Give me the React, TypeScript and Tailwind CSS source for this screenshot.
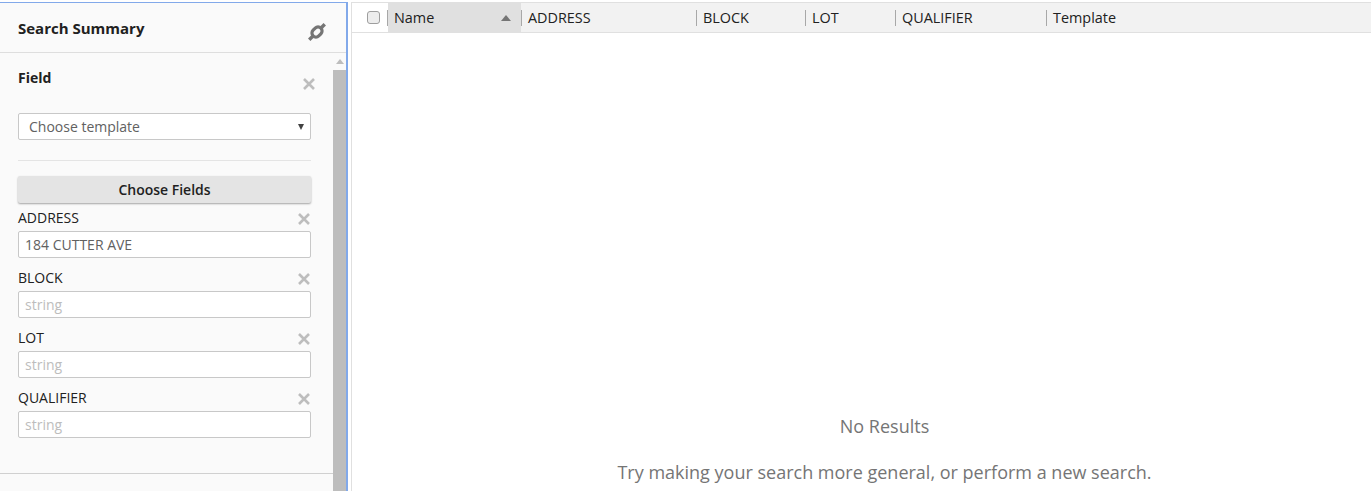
const FONT = "font-['Open_Sans',sans-serif]"

const COLUMNS = [
  { label: 'ADDRESS', width: 'w-[175px]' },
  { label: 'BLOCK', width: 'w-[109px]' },
  { label: 'LOT', width: 'w-[90px]' },
  { label: 'QUALIFIER', width: 'w-[151px]' },
  { label: 'Template', width: 'w-[150px]' },
]

const FIELDS = [
  { label: 'ADDRESS', value: '184 CUTTER AVE' },
  { label: 'BLOCK', value: '' },
  { label: 'LOT', value: '' },
  { label: 'QUALIFIER', value: '' },
]

function CloseIcon() {
  return (
    <svg width="12" height="12" viewBox="0 0 12 12" className="text-[#bdbdbd]">
      <path d="M1 1 L11 11 M11 1 L1 11" stroke="currentColor" strokeWidth="2.6" />
    </svg>
  )
}

function LinkIcon() {
  return (
    <svg width="20" height="20" viewBox="0 0 20 20" className="text-[#757575]">
      <g transform="rotate(-45 10 10)" fill="none" stroke="currentColor">
        <rect x="4.5" y="6" width="11" height="8" rx="4" strokeWidth="3.2" />
        <path d="M-1 10 H4 M16 10 H21" strokeWidth="3.4" />
      </g>
    </svg>
  )
}

function FieldRow({ label, value }: { label: string; value: string }) {
  return (
    <div className="h-[60px]">
      <div className="flex h-[27px] items-center justify-between pb-[1px]">
        <span className="text-[14px] text-[#212121]">{label}</span>
        <span className="mr-[1px] mt-[3px] flex"><CloseIcon /></span>
      </div>
      <div className="flex h-[27px] items-center rounded-[2px] border border-[#c8c8c8] bg-white px-[6px] text-[14px]">
        {value ? <span className="text-[#616161]">{value}</span> : <span className="text-[#bdbdbd]">string</span>}
      </div>
    </div>
  )
}

function Sidebar() {
  return (
    <aside className="flex h-full w-[348px] shrink-0 flex-col border-t border-r-2 border-[#82a9ea] bg-[#fafafa]">
      <div className="flex h-[50px] shrink-0 items-center justify-between border-b border-[#dedede] pl-[18px] pr-[19px]">
        <span className="mt-[2px] text-[15px] font-bold text-[#212121]">Search Summary</span>
        <span className="mt-[8px] flex"><LinkIcon /></span>
      </div>
      <div className="flex min-h-0 flex-1">
        <div className="min-w-0 flex-1">
          <div className="px-[18px] pr-[22px]">
            <div className="flex h-[60px] items-start justify-between pt-[15px]">
              <span className="text-[14px] font-bold leading-[20px] text-[#212121]">Field</span>
              <span className="-mr-[4px] mt-[10px] flex"><CloseIcon /></span>
            </div>
            <div className="flex h-[27px] items-center justify-between rounded-[2px] border border-[#c8c8c8] bg-white pl-[10px] pr-[6px] text-[14px] text-[#616161]">
              <span>Choose template</span>
              <span className="h-0 w-0 border-x-[3px] border-t-[6px] border-x-transparent border-t-[#424242]" />
            </div>
            <div className="mt-[20px] h-px bg-[#e4e4e4]" />
            <div className="mt-[15px] flex h-[27px] items-center justify-center rounded-[2px] bg-[#e4e4e4] text-[14px] font-semibold text-[#212121] shadow-[0_1px_2px_rgba(0,0,0,0.35)]">
              Choose Fields
            </div>
            <div className="mt-[1px]">
              {FIELDS.map((f) => (
                <FieldRow key={f.label} label={f.label} value={f.value} />
              ))}
            </div>
          </div>
          <div className="mt-[29px] h-px bg-[#d0d0d0]" />
        </div>
        <div className="flex w-[13px] shrink-0 flex-col">
          <div className="flex h-[17px] items-center justify-center">
            <span className="h-0 w-0 border-x-[4px] border-b-[5px] border-x-transparent border-b-[#bdbdbd]" />
          </div>
          <div className="flex-1 bg-[#bdbdbd]" />
        </div>
      </div>
    </aside>
  )
}

function Divider() {
  return <span className="h-[16px] w-px shrink-0 bg-[#a8a8a8]" />
}

function Results() {
  return (
    <main className="ml-[3px] flex h-full min-w-0 flex-1 flex-col border-l border-[#e0e0e0]">
      <div className="flex h-[31px] shrink-0 items-stretch border-y border-[#e0e0e0] bg-[#f2f2f2] text-[14.4px] text-[#212121]">
        <div className="flex w-[36px] items-center justify-end bg-white">
          <span className="mr-[7px] h-[13px] w-[13px] rounded-[3px] border border-[#9e9e9e] bg-[#ededed]" />
          <Divider />
        </div>
        <div className="flex w-[133px] items-center justify-between bg-[#e0e0e0] pl-[6px] pr-[10px]">
          <span>Name</span>
          <span className="h-0 w-0 border-x-[5.5px] border-b-[6px] border-x-transparent border-b-[#757575]" />
        </div>
        {COLUMNS.map((c) => (
          <div key={c.label} className={`flex items-center ${c.width}`}>
            <Divider />
            <span className="pl-[6px]">{c.label}</span>
          </div>
        ))}
      </div>
      <div className="flex flex-1 flex-col items-center pl-[46px] pt-[380px] text-[18px] text-[#757575]">
        <div className="leading-[26px]">No Results</div>
        <div className="mt-[20px] leading-[26px]">Try making your search more general, or perform a new search.</div>
      </div>
    </main>
  )
}

export default function App() {
  return (
    <div className={`flex h-[491px] w-[1371px] overflow-hidden bg-white pt-[2px] ${FONT}`}>
      <Sidebar />
      <Results />
    </div>
  )
}
